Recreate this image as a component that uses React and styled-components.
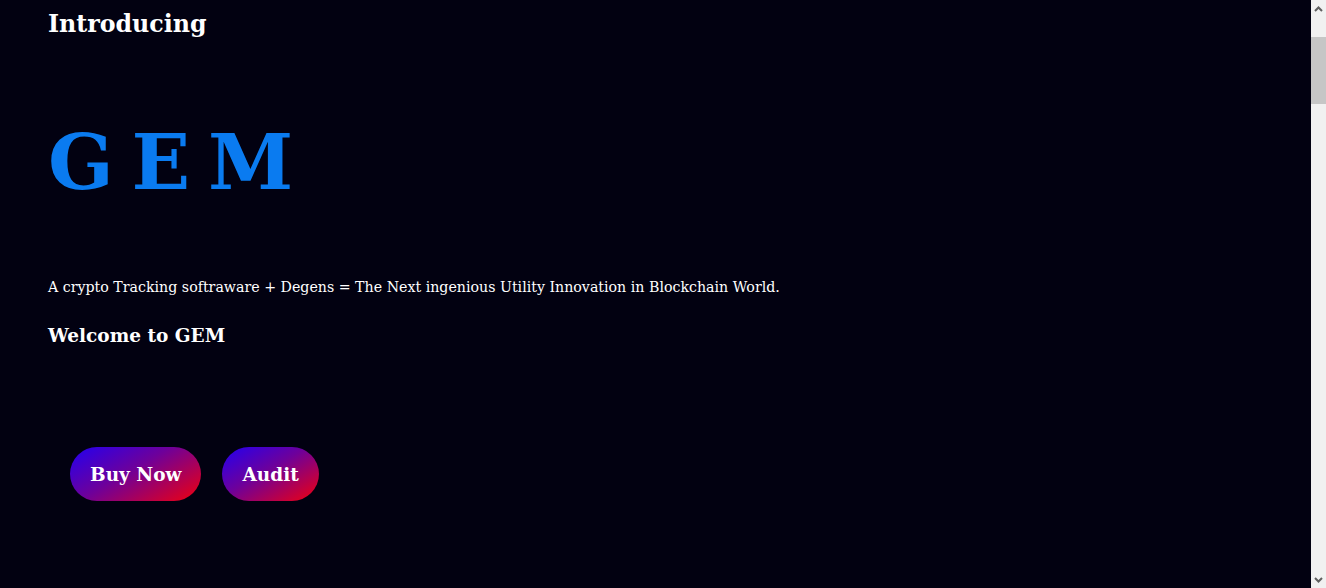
import React from "react";
import styled, { createGlobalStyle } from "styled-components";

const GlobalStyle = createGlobalStyle`
  html, body {
    margin: 0;
    padding: 0;
    background-color: #020111;
    overflow: hidden;
  }
  body {
    font-family: "DejaVu Serif", "Liberation Serif", serif;
    color: #ffffff;
  }
`;

const Window = styled.div`
  display: flex;
  height: 100vh;
  background-color: #020111;
`;

const Content = styled.main`
  flex: 1;
  min-width: 0;
  overflow: hidden;
`;

const Hero = styled.section`
  display: flex;
  flex-direction: column;
  align-items: flex-start;
  padding: 8px 48px 0;
`;

const Intro = styled.h3`
  margin: 0;
  font-size: 23.7px;
  font-weight: 700;
  line-height: 32px;
`;

const Title = styled.h1`
  margin: 82px 0 0;
  font-size: 77px;
  font-weight: 700;
  line-height: 80px;
  color: #0a7bf0;
  letter-spacing: -4.5px;
  white-space: pre;
`;

const Tagline = styled.p`
  margin: 74px 0 0;
  font-size: 14.2px;
  line-height: 22px;
`;

const Welcome = styled.h4`
  margin: 25px 0 0;
  font-size: 18.5px;
  font-weight: 700;
  line-height: 26px;
`;

const Actions = styled.div`
  display: flex;
  gap: 21px;
  margin: 98px 0 0 22px;
`;

const GradientButton = styled.button`
  height: 54px;
  padding: 0 20px;
  border: none;
  border-radius: 27px;
  background: linear-gradient(150deg, #2200f2 0%, #6e009a 45%, #f2000c 100%);
  color: #ffffff;
  font-family: inherit;
  font-size: 18.5px;
  font-weight: 700;
  cursor: pointer;
`;

const Scrollbar = styled.aside`
  display: flex;
  flex-direction: column;
  width: 15px;
  flex-shrink: 0;
  background: #f1f1f1;
`;

const ScrollArrow = styled.div`
  display: flex;
  align-items: center;
  justify-content: center;
  height: 17px;
  flex-shrink: 0;
`;

const Track = styled.div`
  flex: 1;
  padding-top: 20px;
`;

const Thumb = styled.div`
  height: 67px;
  background: #c6c6c6;
`;

const Arrow = ({ down }) => (
  <svg width="9" height="6" viewBox="0 0 9 6">
    <path
      d={down ? "M1 1 L4.5 4.5 L8 1" : "M1 5 L4.5 1.5 L8 5"}
      fill="none"
      stroke="#5f5f5f"
      strokeWidth="2"
    />
  </svg>
);

export default function App() {
  return (
    <Window>
      <GlobalStyle />
      <Content>
        <Hero>
          <Intro>Introducing</Intro>
          <Title>G E M</Title>
          <Tagline>
            A crypto Tracking softraware + Degens = The Next ingenious Utility
            Innovation in Blockchain World.
          </Tagline>
          <Welcome>Welcome to GEM</Welcome>
          <Actions>
            <GradientButton>Buy Now</GradientButton>
            <GradientButton>Audit</GradientButton>
          </Actions>
        </Hero>
      </Content>
      <Scrollbar>
        <ScrollArrow>
          <Arrow />
        </ScrollArrow>
        <Track>
          <Thumb />
        </Track>
        <ScrollArrow>
          <Arrow down />
        </ScrollArrow>
      </Scrollbar>
    </Window>
  );
}
